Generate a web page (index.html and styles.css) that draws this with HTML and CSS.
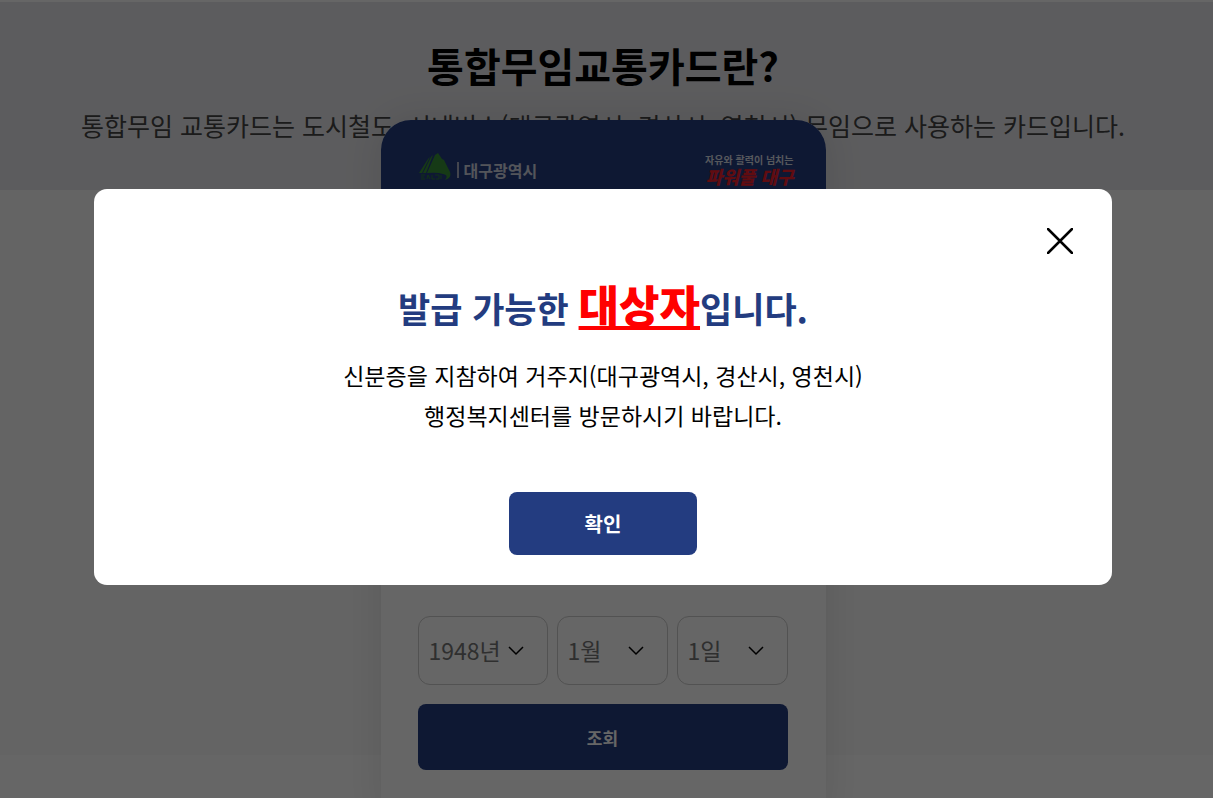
FILE: index.html
```html
<!DOCTYPE html>
<html lang="ko">
<head>
    <meta charset="UTF-8">
    <meta name="viewport" content="width=device-width, initial-scale=1.0">
    <title>통합무임교통카드</title>
    <link rel="stylesheet" href="styles.css">
</head>
<body class="modal-open">

<section class="intro">
    <h1>통합무임교통카드란?</h1>
    <p>통합무임 교통카드는 도시철도, 시내버스(대구광역시, 경산시, 영천시) 무임으로 사용하는 카드입니다.</p>
</section>

<main class="content">
    <div class="card">
        <header class="card-header">
            <div class="city">
                <svg class="city-mark" viewBox="0 0 32 28" aria-hidden="true">
                    <path d="M0 20 L9 6 L11 4 L3 20 Z"/>
                    <path d="M4 20 L12 4 L14 2 L7 20 Z"/>
                    <path d="M8 20 L16 2 L19 0 L23 6 L25 7 L31 19 Q33 25 26 27 Q30 22 24 21 Q18 19 8 20 Z"/>
                    <path d="M2 22 h4 M2 24 h3 M2 26 h4 M8 26 l1 -4 l2 4 M13 22 v4 h3 M16 22 h4 v4 h-3 M22 22 v4" class="thin"/>
                </svg>
                <span class="city-name">대구광역시</span>
            </div>
            <div class="slogan">
                <span>자유와 활력이 넘치는</span>
                <strong>파워풀 대구</strong>
            </div>
        </header>
        <form class="card-body">
            <div class="birth">
                <div class="select-box year">
                    <select id="year" aria-label="출생 연도"><option>1948년</option></select>
                    <svg viewBox="0 0 16 10" aria-hidden="true"><path d="M1 1 L8 8 L15 1"/></svg>
                </div>
                <div class="select-box">
                    <select id="month" aria-label="출생 월"><option>1월</option></select>
                    <svg viewBox="0 0 16 10" aria-hidden="true"><path d="M1 1 L8 8 L15 1"/></svg>
                </div>
                <div class="select-box">
                    <select id="day" aria-label="출생 일"><option>1일</option></select>
                    <svg viewBox="0 0 16 10" aria-hidden="true"><path d="M1 1 L8 8 L15 1"/></svg>
                </div>
            </div>
            <button type="button" class="btn btn-search">조회</button>
        </form>
    </div>
</main>

<div class="overlay">
    <div class="modal" role="dialog" aria-modal="true" aria-labelledby="modalTitle">
        <button type="button" class="close" aria-label="닫기">
            <svg viewBox="0 0 26 26" aria-hidden="true"><path d="M1 1 L25 25 M25 1 L1 25"/></svg>
        </button>
        <h2 id="modalTitle">발급 가능한 <strong>대상자</strong>입니다.</h2>
        <p>신분증을 지참하여 거주지(대구광역시, 경산시, 영천시)<br>행정복지센터를 방문하시기 바랍니다.</p>
        <button type="button" class="btn btn-confirm">확인</button>
    </div>
</div>

</body>
</html>
```
FILE: styles.css
```css
* {
    box-sizing: border-box;
}
body {
    margin: 0;
    font-family: "Noto Sans CJK KR", sans-serif;
    color: #000;
    background-color: #fff;
}
.modal-open {
    height: 100vh;
    overflow: hidden;
}
h1, h2, p {
    margin: 0;
}
button, select {
    font-family: inherit;
}
svg {
    display: block;
}

/* intro */
.intro {
    padding: 34px 7px 47px 0;
    border-top: 2px solid #fff;
    background-color: #e6e6ea;
    text-align: center;
}
.intro h1 {
    font-size: 40px;
    line-height: 58px;
    font-weight: 700;
}
.intro p {
    margin-top: 13px;
    font-size: 25px;
    line-height: 36px;
    color: #444;
}

/* card */
.content {
    height: 565px;
    padding-right: 7px;
    background-color: #fafafa;
}
.card {
    position: relative;
    top: -70px;
    width: 445px;
    margin: 0 auto;
    border-radius: 30px;
    background-color: #fff;
    box-shadow: 0 0 40px rgba(0, 0, 0, 0.1);
}
.card-header {
    display: flex;
    justify-content: space-between;
    align-items: flex-start;
    height: 160px;
    padding: 33px 32px 0 38px;
    border-radius: 30px 30px 0 0;
    background-color: #233c80;
}
.city {
    display: flex;
    align-items: center;
    gap: 6px;
}
.city-mark {
    width: 32px;
    height: 28px;
    fill: #389138;
}
.city-mark .thin {
    fill: none;
    stroke: #2c7a3c;
    stroke-width: 1;
}
.city-name {
    margin-top: 6px;
    padding-left: 5px;
    border-left: 2px solid #aab0c4;
    font-size: 16px;
    line-height: 16px;
    font-weight: 700;
    color: #d0d4e0;
}
.slogan {
    display: flex;
    flex-direction: column;
    align-items: flex-end;
    color: #d8dbe6;
}
.slogan span {
    font-size: 10px;
    line-height: 14px;
    font-weight: 700;
}
.slogan strong {
    font-size: 18px;
    line-height: 18px;
    font-weight: 900;
    font-style: italic;
    color: #f0202c;
}
.card-body {
    padding: 336px 38px 60px 37px;
}
.birth {
    display: flex;
    gap: 9px;
}
.select-box {
    position: relative;
    flex: 1;
}
.select-box.year {
    flex: 0 0 130px;
}
.select-box select {
    width: 100%;
    height: 69px;
    padding: 0 10px 2px;
    border: 1px solid #ccc;
    border-radius: 12px;
    background-color: #fff;
    color: #777;
    font-size: 23px;
    appearance: none;
}
.select-box svg {
    position: absolute;
    top: 30px;
    right: 24px;
    width: 16px;
    height: 10px;
    fill: none;
    stroke: #000;
    stroke-width: 1.5;
    pointer-events: none;
}
.btn {
    border: none;
    border-radius: 8px;
    background-color: #233c80;
    color: #fff;
    font-weight: 700;
    cursor: pointer;
}
.btn-search {
    width: 100%;
    height: 66px;
    margin-top: 19px;
    font-size: 17px;
}

/* modal */
.overlay {
    position: fixed;
    inset: 0;
    display: flex;
    justify-content: center;
    align-items: center;
    padding: 0 7px 24px 0;
    background-color: rgba(0, 0, 0, 0.6);
}
.modal {
    position: relative;
    width: 84vw;
    padding: 82px 30px 30px;
    border-radius: 13px;
    background-color: #fff;
    text-align: center;
}
.modal h2 {
    font-size: 35px;
    line-height: 66px;
    font-weight: 700;
    color: #233c80;
}
.modal h2 strong {
    font-size: 44px;
    font-weight: 900;
    color: #f00;
    text-decoration: underline;
}
.modal p {
    margin-top: 14px;
    font-size: 23px;
    line-height: 40px;
}
.close {
    position: absolute;
    top: 39px;
    right: 39px;
    padding: 0;
    border: none;
    background: none;
    cursor: pointer;
}
.close svg {
    width: 26px;
    height: 26px;
    fill: none;
    stroke: #000;
    stroke-width: 2.5;
    stroke-linecap: round;
}
.btn-confirm {
    width: 188px;
    height: 63px;
    margin-top: 57px;
    font-size: 20px;
}
```
